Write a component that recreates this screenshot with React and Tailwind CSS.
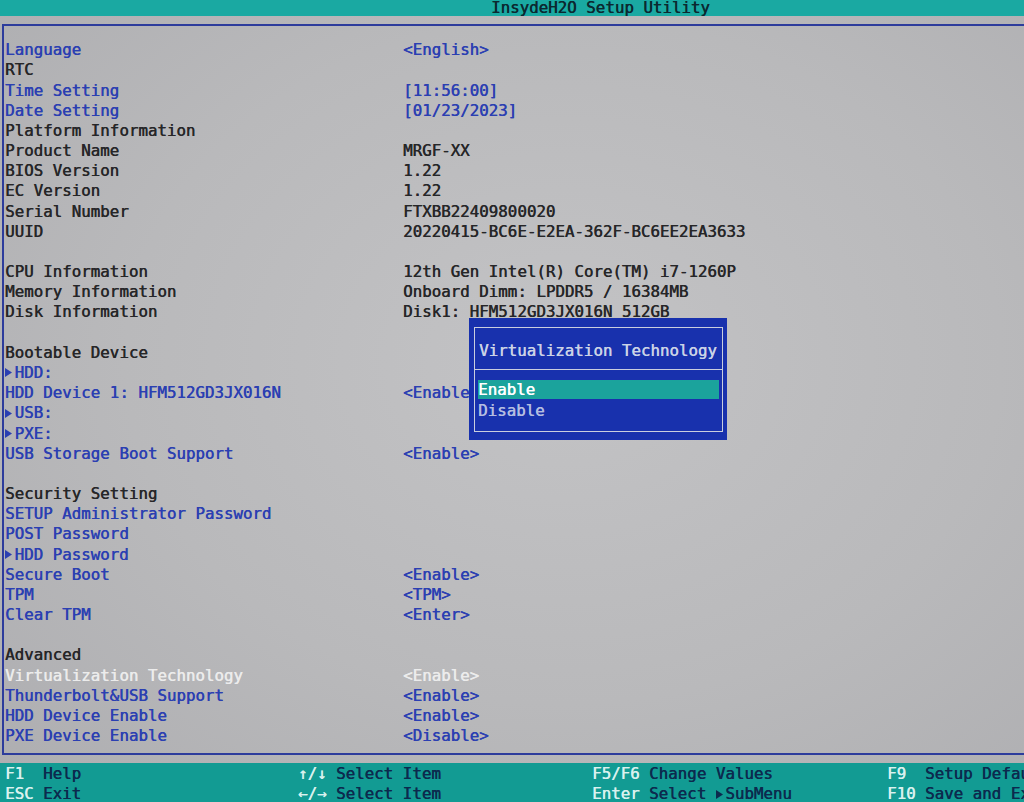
import React from 'react';

const rows = [
  ['Language', '<English>', 'b'],
  ['RTC', '', 'd'],
  ['Time Setting', '[11:56:00]', 'b'],
  ['Date Setting', '[01/23/2023]', 'b'],
  ['Platform Information', '', 'd'],
  ['Product Name', 'MRGF-XX', 'd'],
  ['BIOS Version', '1.22', 'd'],
  ['EC Version', '1.22', 'd'],
  ['Serial Number', 'FTXBB22409800020', 'd'],
  ['UUID', '20220415-BC6E-E2EA-362F-BC6EE2EA3633', 'd'],
  ['', '', 'd'],
  ['CPU Information', '12th Gen Intel(R) Core(TM) i7-1260P', 'd'],
  ['Memory Information', 'Onboard Dimm: LPDDR5 / 16384MB', 'd'],
  ['Disk Information', 'Disk1: HFM512GD3JX016N 512GB', 'd'],
  ['', '', 'd'],
  ['Bootable Device', '', 'd'],
  ['HDD:', '', 'b', true],
  ['HDD Device 1: HFM512GD3JX016N', '<Enable>', 'b'],
  ['USB:', '', 'b', true],
  ['PXE:', '', 'b', true],
  ['USB Storage Boot Support', '<Enable>', 'b'],
  ['', '', 'd'],
  ['Security Setting', '', 'd'],
  ['SETUP Administrator Password', '', 'b'],
  ['POST Password', '', 'b'],
  ['HDD Password', '', 'b', true],
  ['Secure Boot', '<Enable>', 'b'],
  ['TPM', '<TPM>', 'b'],
  ['Clear TPM', '<Enter>', 'b'],
  ['', '', 'd'],
  ['Advanced', '', 'd'],
  ['Virtualization Technology', '<Enable>', 's'],
  ['Thunderbolt&USB Support', '<Enable>', 'b'],
  ['HDD Device Enable', '<Enable>', 'b'],
  ['PXE Device Enable', '<Disable>', 'b'],
];

const tone = {
  b: 'text-[#2b3fb2]',
  d: 'text-[#262628]',
  s: 'text-[#ececec]',
};

function Tri({ className = '' }) {
  return (
    <span className="inline-flex w-[9.5px] shrink-0 items-center justify-start">
      <svg width="7" height="9" viewBox="0 0 7 9" className={className}>
        <path d="M0 0 L7 4.5 L0 9 Z" fill="currentColor" />
      </svg>
    </span>
  );
}

function Row({ label, value, kind, sub }) {
  return (
    <div className={`flex h-[20.18px] items-center whitespace-pre ${tone[kind]}`}>
      <div className="w-[398px] shrink-0 flex items-center">
        {sub && <Tri />}
        {label}
      </div>
      <div>{value}</div>
    </div>
  );
}

function Key({ k, d }) {
  return (
    <span>
      <span className="text-[#d9f1ee]">{k}</span>
      <span className="text-[#0c2a4e]">{d}</span>
    </span>
  );
}

export default function App() {
  return (
    <div
      style={{ fontFamily: "'DejaVu Sans Mono', 'Liberation Mono', monospace" }}
      className="w-[1024px] h-[802px] overflow-hidden flex flex-col text-[15.8px] [text-shadow:0.5px_0_0_currentColor] bg-[radial-gradient(ellipse_at_55%_45%,#c3c3c5_0%,#b9b9bb_55%,#adadb0_100%)]"
    >
      {/* title bar */}
      <div className="h-[16px] shrink-0 bg-[#1aa9a2] overflow-hidden flex items-center pl-[491px]">
        <span className="leading-[16px] text-[#0b2830] whitespace-pre">InsydeH2O Setup Utility</span>
      </div>
      <div className="h-[8px] shrink-0" />

      {/* main frame */}
      <div className="relative flex-1 border-t-2 border-b-2 border-l-2 border-[#2d3c9c] ml-[2px] pt-[14px] pl-[1px]">
        {rows.map(([l, v, k, s], i) => (
          <Row key={i} label={l} value={v} kind={k} sub={s} />
        ))}

        {/* option popup */}
        <div className="absolute left-[465px] top-[292px] w-[258px] h-[122px] bg-[#1831ad] pt-[9px] pl-[5px] pr-[4px] pb-[8px]">
          <div className="h-full border border-[#c9cede] flex flex-col">
            <div className="h-[42px] flex items-center pt-[4px] pl-[4px] text-[#cbd3e6] whitespace-pre border-b border-[#c9cede]">
              Virtualization Technology
            </div>
            <div className="pt-[10px] px-[3px]">
              <div className="h-[19px] flex items-center bg-[#1ba39c] text-white">Enable</div>
              <div className="h-[21px] flex items-center pt-[2px] text-[#b4bde0]">Disable</div>
            </div>
          </div>
        </div>
      </div>

      <div className="h-[8px] shrink-0" />

      {/* footer */}
      <div className="h-[39px] shrink-0 bg-[#129b93] overflow-hidden pl-[5px] pt-[1px] whitespace-pre">
        <div className="flex h-[20px] items-center">
          <div className="w-[293px] shrink-0"><Key k="F1  " d="Help" /></div>
          <div className="w-[294px] shrink-0"><Key k="↑/↓ " d="Select Item" /></div>
          <div className="w-[295px] shrink-0"><Key k="F5/F6 " d="Change Values" /></div>
          <div className="shrink-0"><Key k="F9  " d="Setup Defaults" /></div>
        </div>
        <div className="flex h-[20px] items-center">
          <div className="w-[293px] shrink-0"><Key k="ESC " d="Exit" /></div>
          <div className="w-[294px] shrink-0"><Key k="←/→ " d="Select Item" /></div>
          <div className="w-[295px] shrink-0 flex items-center">
            <Key k="Enter " d="Select " />
            <span className="text-[#0c2a4e] flex items-center"><Tri /></span>
            <span className="text-[#0c2a4e]">SubMenu</span>
          </div>
          <div className="shrink-0"><Key k="F10 " d="Save and Exit" /></div>
        </div>
      </div>
    </div>
  );
}
